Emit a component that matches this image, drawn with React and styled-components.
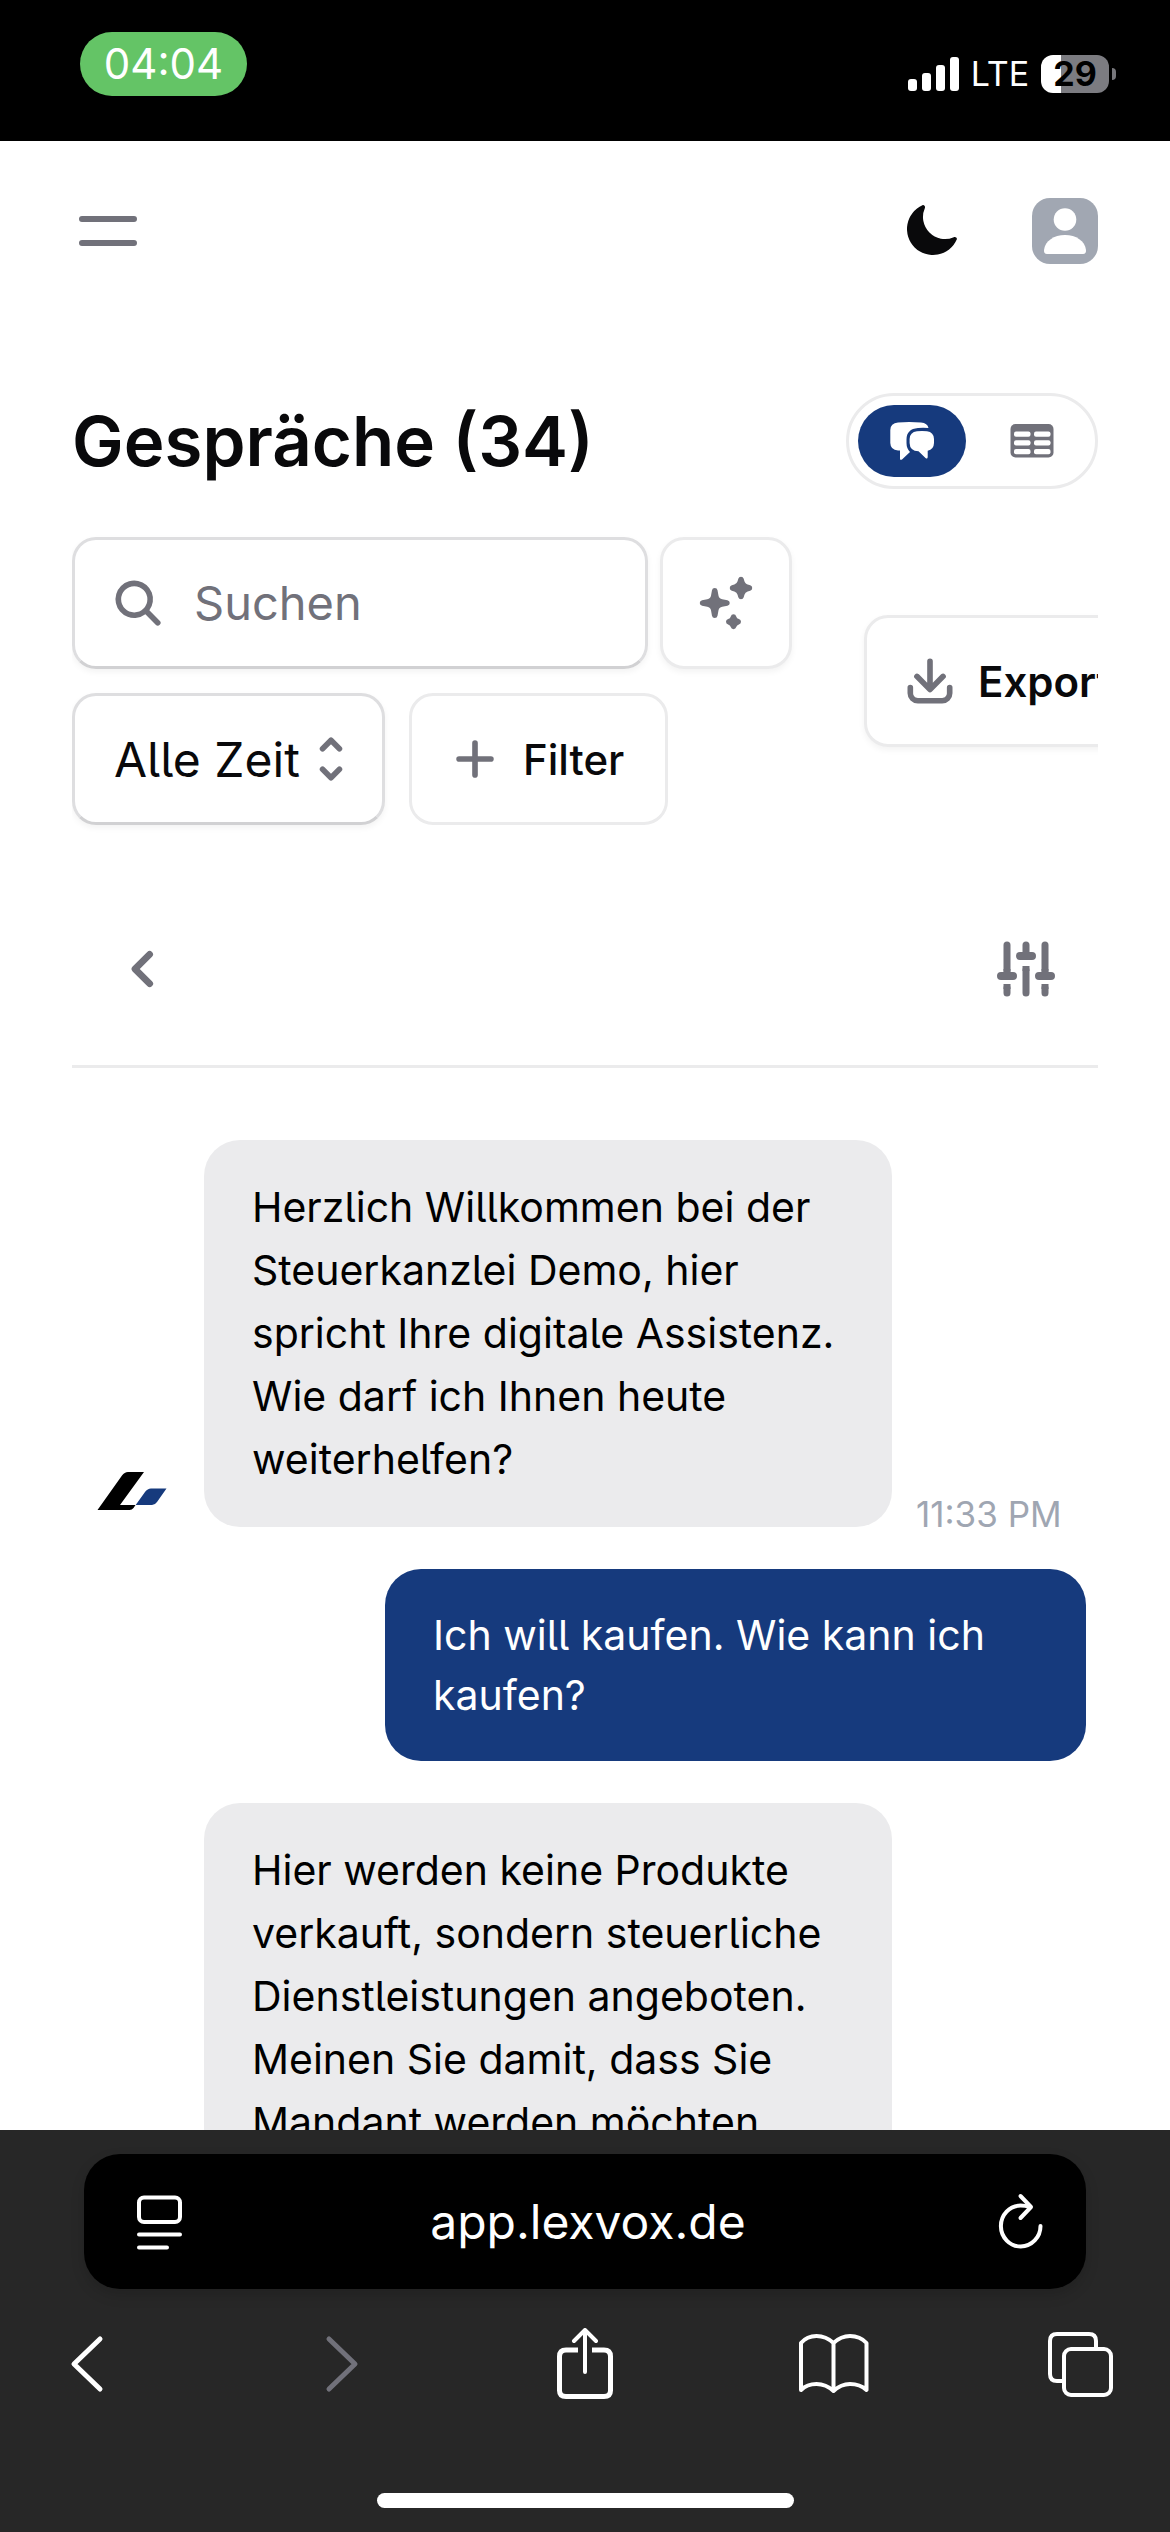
import React from "react";
import styled, { createGlobalStyle } from "styled-components";

const GlobalStyle = createGlobalStyle`
  * {
    box-sizing: border-box;
  }

  body {
    margin: 0;
    background-color: #fff;
    color: #09090b;
    font-family: Inter, "Liberation Sans", sans-serif;
  }

  button, input, select {
    font-family: inherit;
    color: inherit;
    margin: 0;
  }

  svg {
    display: block;
    flex-shrink: 0;
  }
`;

const Screen = styled.div`
  display: flex;
  flex-direction: column;
  height: 100vh;
  overflow: hidden;
`;

/* Status bar */

const StatusBar = styled.div`
  display: flex;
  justify-content: space-between;
  align-items: flex-start;
  height: 141px;
  flex-shrink: 0;
  padding: 32px 54px 0 80px;
  background-color: #000;
  color: #fff;
`;

const Clock = styled.div`
  width: 167px;
  border-radius: 32px;
  background-color: #64c466;
  font-size: 42px;
  line-height: 64px;
  text-align: center;
`;

const StatusIcons = styled.div`
  display: flex;
  align-items: center;
  gap: 14px;
  padding-top: 20px;
`;

const Network = styled.span`
  display: flex;
  justify-content: center;
  width: 54px;
  font-size: 34px;
  line-height: 44px;
`;

const Battery = styled.div`
  display: flex;
  align-items: center;
  gap: 3px;

  &::after {
    content: "";
    width: 4px;
    height: 12px;
    border-radius: 0 6px 6px 0;
    background-color: #77777c;
  }
`;

const BatteryLevel = styled.span`
  width: 68px;
  height: 38px;
  border-radius: 12px;
  background: linear-gradient(to right, #fff 29%, #7c7c81 29%);
  color: #000;
  font-size: 34px;
  font-weight: 700;
  line-height: 38px;
  text-align: center;
`;

/* App shell */

const Page = styled.div`
  flex: 1;
  min-height: 0;
  overflow: hidden;
  font-feature-settings: "cv05";
`;

const Header = styled.header`
  display: flex;
  align-items: center;
  justify-content: space-between;
  height: 180px;
  padding: 0 72px;
`;

const HeaderActions = styled.div`
  display: flex;
  align-items: center;
  gap: 69px;
`;

const IconButton = styled.button`
  display: flex;
  align-items: center;
  justify-content: center;
  padding: 0;
  border: 0;
  background: none;
  color: ${(props) => props.$color || "#71717a"};
`;

const Main = styled.main`
  padding: 72px 72px 0;
`;

const TitleRow = styled.div`
  display: flex;
  align-items: center;
  justify-content: space-between;
  margin-bottom: 48px;
`;

const Title = styled.h1`
  margin: 0;
  font-size: 69px;
  font-weight: 600;
  line-height: 96px;
`;

const ViewToggle = styled.div`
  display: flex;
  padding: 9px;
  gap: 12px;
  border: 3px solid #ebebec;
  border-radius: 48px;
`;

const ViewButton = styled.button`
  display: flex;
  align-items: center;
  justify-content: center;
  width: 108px;
  height: 72px;
  padding: 0;
  border: 0;
  border-radius: 36px;
  background-color: ${(props) => (props.$active ? "#163a7d" : "transparent")};
  color: ${(props) => (props.$active ? "#fff" : "#71717a")};
`;

/* Filters */

const Toolbar = styled.div`
  display: flex;
  align-items: center;
  gap: 72px;
  overflow-x: clip;
`;

const Filters = styled.div`
  display: flex;
  flex-direction: column;
  gap: 24px;
  flex-shrink: 0;
`;

const FilterRow = styled.div`
  display: flex;
  gap: ${(props) => props.$gap}px;
`;

const SearchField = styled.label`
  display: flex;
  align-items: center;
  gap: 26px;
  width: 576px;
  height: 132px;
  padding: 0 33px;
  border: 3px solid #dedee0;
  border-bottom-color: #d1d1d3;
  border-radius: 24px;
  box-shadow: 0 3px 6px rgba(0, 0, 0, 0.05);
  color: #71717a;
`;

const SearchInput = styled.input`
  flex: 1;
  min-width: 0;
  padding: 0;
  border: 0;
  outline: 0;
  background: none;
  font-size: 47px;
  line-height: 72px;

  &::placeholder {
    color: #71717a;
    opacity: 1;
  }
`;

const OutlineButton = styled.button`
  display: flex;
  align-items: center;
  justify-content: center;
  gap: 18px;
  flex-shrink: 0;
  height: 132px;
  min-width: 132px;
  padding: 0 ${(props) => (props.$square ? 0 : 41)}px 0
    ${(props) => (props.$square ? 0 : 33)}px;
  border: 3px solid #ebebec;
  border-radius: 24px;
  background-color: #fff;
  box-shadow: ${(props) =>
    props.$flat ? "none" : "0 3px 6px rgba(0, 0, 0, 0.05)"};
  font-size: 42px;
  font-weight: ${(props) => props.$weight || 500};
  white-space: nowrap;

  svg {
    color: #71717a;
  }
`;

const SelectWrap = styled.div`
  position: relative;

  svg {
    position: absolute;
    top: 36px;
    right: 24px;
    pointer-events: none;
  }
`;

const Select = styled.select`
  appearance: none;
  width: 313px;
  height: 132px;
  padding: 0 0 0 39px;
  border: 3px solid #dedee0;
  border-bottom-color: #d1d1d3;
  border-radius: 24px;
  background-color: #fff;
  box-shadow: 0 3px 6px rgba(0, 0, 0, 0.05);
  font-size: 48px;
  font-feature-settings: inherit;
`;

/* Conversation */

const PanelHeader = styled.div`
  display: flex;
  align-items: center;
  justify-content: space-between;
  height: 195px;
  margin-top: 48px;
  padding: 0 36px;
  border-bottom: 3px solid #ebebec;
`;

const Messages = styled.div`
  display: flex;
  flex-direction: column;
  gap: 42px;
  padding: 72px 12px 0 24px;
`;

const AgentMessage = styled.div`
  display: flex;
  align-items: flex-end;
`;

const AgentBubble = styled.div`
  width: 688px;
  margin: 0 24px 0 36px;
  padding: 36px 48px;
  border-radius: 36px;
  background-color: #ebebed;
  color: #000;
  font-size: 41px;
  line-height: 63px;
  white-space: pre;
`;

const UserBubble = styled.div`
  align-self: flex-end;
  width: 701px;
  padding: 36px 48px;
  border-radius: 36px;
  background-color: #163a7d;
  color: #fff;
  font-size: 41px;
  line-height: 60px;
  white-space: pre;
`;

const Time = styled.time`
  color: #9fa6b2;
  font-size: 35px;
  line-height: 26px;
  white-space: nowrap;
`;

/* Browser bar */

const BrowserBar = styled.footer`
  flex-shrink: 0;
  padding: 24px 0;
  background-color: #272727;
  color: #fff;
`;

const AddressBar = styled.div`
  display: flex;
  align-items: center;
  justify-content: space-between;
  height: 135px;
  margin: 0 84px;
  padding: 0 38px;
  border-radius: 36px;
  background-color: #000;
  box-shadow: 0 6px 14px rgba(0, 0, 0, 0.15);
  font-size: 48px;
`;

const BrowserNav = styled.nav`
  display: flex;
  justify-content: space-between;
  padding: 39px 50px 93px;
`;

const HomeIndicator = styled.div`
  width: 417px;
  height: 15px;
  margin: 0 auto;
  border-radius: 8px;
  background-color: #fff;
`;

/* Icons */

const SignalIcon = () => (
  <svg width="51" height="34" viewBox="0 0 51 34" fill="currentColor">
    <rect x="0" y="22" width="9" height="12" rx="3" />
    <rect x="14" y="16" width="9" height="18" rx="3" />
    <rect x="28" y="8" width="9" height="26" rx="3" />
    <rect x="42" y="0" width="9" height="34" rx="3" />
  </svg>
);

const MenuIcon = () => (
  <svg width="72" height="72" viewBox="0 0 72 72" stroke="currentColor" strokeWidth="6" strokeLinecap="round">
    <path d="M10 24h52M10 48h52" />
  </svg>
);

const AvatarIcon = () => (
  <svg width="66" height="66" viewBox="0 0 66 66">
    <rect width="66" height="66" rx="18" fill="#a1a7b2" />
    <circle cx="33" cy="21.5" r="11.3" fill="#fff" />
    <path d="M12 52c1-9 10-15 21-15s20 6 21 15c.2 2.5-.8 4-3 4H15c-2.2 0-3.2-1.5-3-4z" fill="#fff" />
  </svg>
);

const SolidIcon = ({ size = 60, children }) => (
  <svg width={size} height={size} viewBox="0 0 16 16" fill="currentColor" fillRule="evenodd">
    {children}
  </svg>
);

const MoonIcon = () => (
  <SolidIcon size={64}>
    <path d="M14.438 10.148c.19-.425-.321-.787-.748-.601A5.5 5.5 0 0 1 6.453 2.31c.186-.427-.176-.938-.6-.748a6.501 6.501 0 1 0 8.585 8.586Z" />
  </SolidIcon>
);

const SearchIcon = () => (
  <SolidIcon>
    <path d="M9.965 11.026a5 5 0 1 1 1.06-1.06l2.755 2.754a.75.75 0 1 1-1.06 1.06l-2.755-2.754ZM10.5 7a3.5 3.5 0 1 1-7 0 3.5 3.5 0 0 1 7 0Z" />
  </SolidIcon>
);

const SparklesIcon = () => (
  <SolidIcon>
    <path d="M5 4a.75.75 0 0 1 .738.616l.252 1.388A1.25 1.25 0 0 0 6.996 7.01l1.388.252a.75.75 0 0 1 0 1.476l-1.388.252A1.25 1.25 0 0 0 5.99 9.996l-.252 1.388a.75.75 0 0 1-1.476 0L4.01 9.996A1.25 1.25 0 0 0 3.004 8.99l-1.388-.252a.75.75 0 0 1 0-1.476l1.388-.252A1.25 1.25 0 0 0 4.01 6.004l.252-1.388A.75.75 0 0 1 5 4Z" />
    <path d="M12 1a.75.75 0 0 1 .721.544l.195.682c.118.415.443.74.858.858l.682.195a.75.75 0 0 1 0 1.442l-.682.195a1.25 1.25 0 0 0-.858.858l-.195.682a.75.75 0 0 1-1.442 0l-.195-.682a1.25 1.25 0 0 0-.858-.858l-.682-.195a.75.75 0 0 1 0-1.442l.682-.195a1.25 1.25 0 0 0 .858-.858l.195-.682A.75.75 0 0 1 12 1Z" />
    <path d="M10 11a.75.75 0 0 1 .728.568.968.968 0 0 0 .704.704.75.75 0 0 1 0 1.456.968.968 0 0 0-.704.704.75.75 0 0 1-1.456 0 .968.968 0 0 0-.704-.704.75.75 0 0 1 0-1.456.968.968 0 0 0 .704-.704A.75.75 0 0 1 10 11Z" />
  </SolidIcon>
);

const PlusIcon = () => (
  <SolidIcon>
    <path d="M8.75 3.75a.75.75 0 0 0-1.5 0v3.5h-3.5a.75.75 0 0 0 0 1.5h3.5v3.5a.75.75 0 0 0 1.5 0v-3.5h3.5a.75.75 0 0 0 0-1.5h-3.5v-3.5Z" />
  </SolidIcon>
);

const DownloadIcon = () => (
  <SolidIcon>
    <path d="M8.75 2.75a.75.75 0 0 0-1.5 0v5.69L5.03 6.22a.75.75 0 0 0-1.06 1.06l3.5 3.5a.75.75 0 0 0 1.06 0l3.5-3.5a.75.75 0 0 0-1.06-1.06L8.75 8.44V2.75Z" />
    <path d="M3.5 9.75a.75.75 0 0 0-1.5 0v1.5A2.75 2.75 0 0 0 4.75 14h6.5A2.75 2.75 0 0 0 14 11.25v-1.5a.75.75 0 0 0-1.5 0v1.5c0 .69-.56 1.25-1.25 1.25h-6.5c-.69 0-1.25-.56-1.25-1.25v-1.5Z" />
  </SolidIcon>
);

const BackIcon = () => (
  <SolidIcon size={72}>
    <path d="M9.78 4.22a.75.75 0 0 1 0 1.06L7.06 8l2.72 2.72a.75.75 0 1 1-1.06 1.06L5.47 8.53a.75.75 0 0 1 0-1.06l3.25-3.25a.75.75 0 0 1 1.06 0Z" />
  </SolidIcon>
);

const ChatIcon = () => (
  <svg width="48" height="48" viewBox="0 0 48 48" fill="currentColor">
    <path d="M10 5.5Q21 4.500 33 5.5Q39.500 6 40.500 11Q35 10.500 30 11Q18.500 12 18.500 22.500V26Q18.500 31.500 22 35L14 42.500Q12 43.800 12 41.500V33.500H10Q2.500 33 2.300 26V13Q2.500 6 10 5.500Z" />
    <path d="M29 14.300Q34 13.800 39 14.300Q45.800 15.300 46 22V26Q45.800 32.500 39.700 33.800V40Q39.500 42.500 37.500 41L30.500 34.300Q21.800 34 21.600 26V22Q21.800 15.300 29 14.300Z" />
  </svg>
);

const TableIcon = () => (
  <svg width="48" height="48" viewBox="0 0 48 48">
    <rect x="2.5" y="7" width="43" height="33.5" rx="5" fill="currentColor" />
    <g fill="#fff">
      <rect x="6" y="14.5" width="16.5" height="5.3" rx="2" />
      <rect x="26" y="14.5" width="16.5" height="5.3" rx="2" />
      <rect x="6" y="23.3" width="16.5" height="5.3" rx="2" />
      <rect x="26" y="23.3" width="16.5" height="5.3" rx="2" />
      <rect x="6" y="32" width="16.5" height="5.3" rx="2" />
      <rect x="26" y="32" width="16.5" height="5.3" rx="2" />
    </g>
  </svg>
);

const UpDownIcon = () => (
  <svg width="60" height="60" viewBox="0 0 16 16" fill="none" stroke="#71717a" strokeWidth="1.5" strokeLinecap="round" strokeLinejoin="round">
    <path d="M5.75 10.75L8 13L10.25 10.75M10.25 5.25L8 3L5.75 5.25" />
  </svg>
);

const SlidersIcon = () => (
  <svg width="72" height="72" viewBox="0 0 72 72" fill="none" stroke="currentColor" strokeWidth="7">
    <path d="M17 12v25M17 55v5M36 12v10M36 37v23M55 12v25M55 55v5" strokeLinecap="round" />
    <path d="M17 36v9M36 20v6M55 36v9M17 51v5M36 33v5M55 51v5" />
    <path d="M11 43h12M30 23h12M49 43h12" strokeWidth="8" strokeLinecap="round" />
  </svg>
);

const Logo = () => (
  <svg width="72" height="72" viewBox="0 0 72 72">
    <path d="M1.5 55L26 20.5Q28.5 17 32 17H48L24 50H39.5L37.5 53Q36 55 33.5 55Z" fill="#000" />
    <path d="M39.7 50L49 37Q51.5 33.5 55 33.5H70.5L61 47Q59 50 56 50Z" fill="#163a7d" />
  </svg>
);

const PageIcon = () => (
  <svg width="66" height="60" viewBox="0 0 66 60" fill="none" stroke="currentColor" strokeWidth="4" strokeLinecap="round">
    <rect x="17" y="5.5" width="41" height="24.5" rx="5" />
    <path d="M17 42.5h41M17 55.5h28" />
  </svg>
);

const ReloadIcon = () => (
  <svg width="60" height="60" viewBox="0 0 60 60" fill="none" stroke="currentColor" strokeWidth="4" strokeLinecap="round" strokeLinejoin="round">
    <path d="M52.5 34a19.800 20.500 0 1 1-20-20.500q5 0 9 1.500" />
    <path d="M32.5 4L43 15L32.5 26" />
  </svg>
);

const NavIcon = ({ children }) => (
  <svg width="72" height="72" viewBox="0 0 72 72" fill="none" stroke="currentColor" strokeWidth="5" strokeLinecap="round" strokeLinejoin="round">
    {children}
  </svg>
);

function App() {
  return (
    <>
      <GlobalStyle />
      <Screen>
        <StatusBar>
          <Clock>04:04</Clock>
          <StatusIcons>
            <SignalIcon />
            <Network>LTE</Network>
            <Battery>
              <BatteryLevel>29</BatteryLevel>
            </Battery>
          </StatusIcons>
        </StatusBar>

        <Page>
          <Header>
            <IconButton aria-label="Menü">
              <MenuIcon />
            </IconButton>
            <HeaderActions>
              <IconButton aria-label="Dunkelmodus" $color="#09090b">
                <MoonIcon />
              </IconButton>
              <IconButton aria-label="Profil">
                <AvatarIcon />
              </IconButton>
            </HeaderActions>
          </Header>

          <Main>
            <TitleRow>
              <Title>Gespräche (34)</Title>
              <ViewToggle>
                <ViewButton aria-label="Chatansicht" $active>
                  <ChatIcon />
                </ViewButton>
                <ViewButton aria-label="Tabellenansicht">
                  <TableIcon />
                </ViewButton>
              </ViewToggle>
            </TitleRow>

            <Toolbar>
              <Filters>
                <FilterRow $gap={12}>
                  <SearchField>
                    <SearchIcon />
                    <SearchInput type="text" placeholder="Suchen" aria-label="Suchen" />
                  </SearchField>
                  <OutlineButton aria-label="KI-Suche" $square>
                    <SparklesIcon />
                  </OutlineButton>
                </FilterRow>
                <FilterRow $gap={24}>
                  <SelectWrap>
                    <Select aria-label="Zeitraum" defaultValue="all">
                      <option value="all">Alle Zeit</option>
                    </Select>
                    <UpDownIcon />
                  </SelectWrap>
                  <OutlineButton $flat>
                    <PlusIcon />
                    Filter
                  </OutlineButton>
                </FilterRow>
              </Filters>
              <OutlineButton $weight={600}>
                <DownloadIcon />
                Export
              </OutlineButton>
            </Toolbar>

            <PanelHeader>
              <IconButton aria-label="Zurück">
                <BackIcon />
              </IconButton>
              <IconButton aria-label="Einstellungen">
                <SlidersIcon />
              </IconButton>
            </PanelHeader>

            <Messages>
              <AgentMessage>
                <Logo />
                <AgentBubble>
                  {"Herzlich Willkommen bei der\nSteuerkanzlei Demo, hier\nspricht Ihre digitale Assistenz.\nWie darf ich Ihnen heute\nweiterhelfen?"}
                </AgentBubble>
                <Time>11:33 PM</Time>
              </AgentMessage>
              <UserBubble>{"Ich will kaufen. Wie kann ich\nkaufen?"}</UserBubble>
              <AgentMessage>
                <Logo />
                <AgentBubble>
                  {"Hier werden keine Produkte\nverkauft, sondern steuerliche\nDienstleistungen angeboten.\nMeinen Sie damit, dass Sie\nMandant werden möchten"}
                </AgentBubble>
              </AgentMessage>
            </Messages>
          </Main>
        </Page>

        <BrowserBar>
          <AddressBar>
            <IconButton aria-label="Seitenmenü" $color="#fff">
              <PageIcon />
            </IconButton>
            <span>app.lexvox.de</span>
            <IconButton aria-label="Neu laden" $color="#fff">
              <ReloadIcon />
            </IconButton>
          </AddressBar>
          <BrowserNav>
            <IconButton aria-label="Zurück" $color="#fff">
              <NavIcon>
                <path d="M50 11L24 36L50 61" />
              </NavIcon>
            </IconButton>
            <IconButton aria-label="Vorwärts">
              <NavIcon>
                <path d="M29 11L55 36L29 61" />
              </NavIcon>
            </IconButton>
            <IconButton aria-label="Teilen" $color="#fff">
              <NavIcon>
                <path d="M29 22H17q-6.500 0-6.500 6.500v34q0 6 6.500 6h38q6.500 0 6.500-6V28.500q0-6.500-6.500-6.500H43" strokeLinecap="butt" />
                <path d="M36 44V2M25 13L36 2L47 13" strokeWidth="4" />
              </NavIcon>
            </IconButton>
            <IconButton aria-label="Lesezeichen" $color="#fff">
              <NavIcon>
                <path d="M34.500 15Q27 8 17.500 8Q8 8 2 15V62Q8 56 17.500 56Q27 56 34.500 63Q42 56 51 56Q61 56 67.500 62V15Q61 8 51 8Q42 8 34.500 15V62" strokeWidth="4" />
              </NavIcon>
            </IconButton>
            <IconButton aria-label="Tabs" $color="#fff">
              <NavIcon>
                <rect x="16" y="21" width="47" height="46" rx="7" strokeWidth="4" />
                <path d="M48 20v-7q0-7-7-7H9q-7 0-7 7v33q0 7 7 7H15" strokeWidth="4" strokeLinecap="butt" />
              </NavIcon>
            </IconButton>
          </BrowserNav>
          <HomeIndicator />
        </BrowserBar>
      </Screen>
    </>
  );
}

export default App;
